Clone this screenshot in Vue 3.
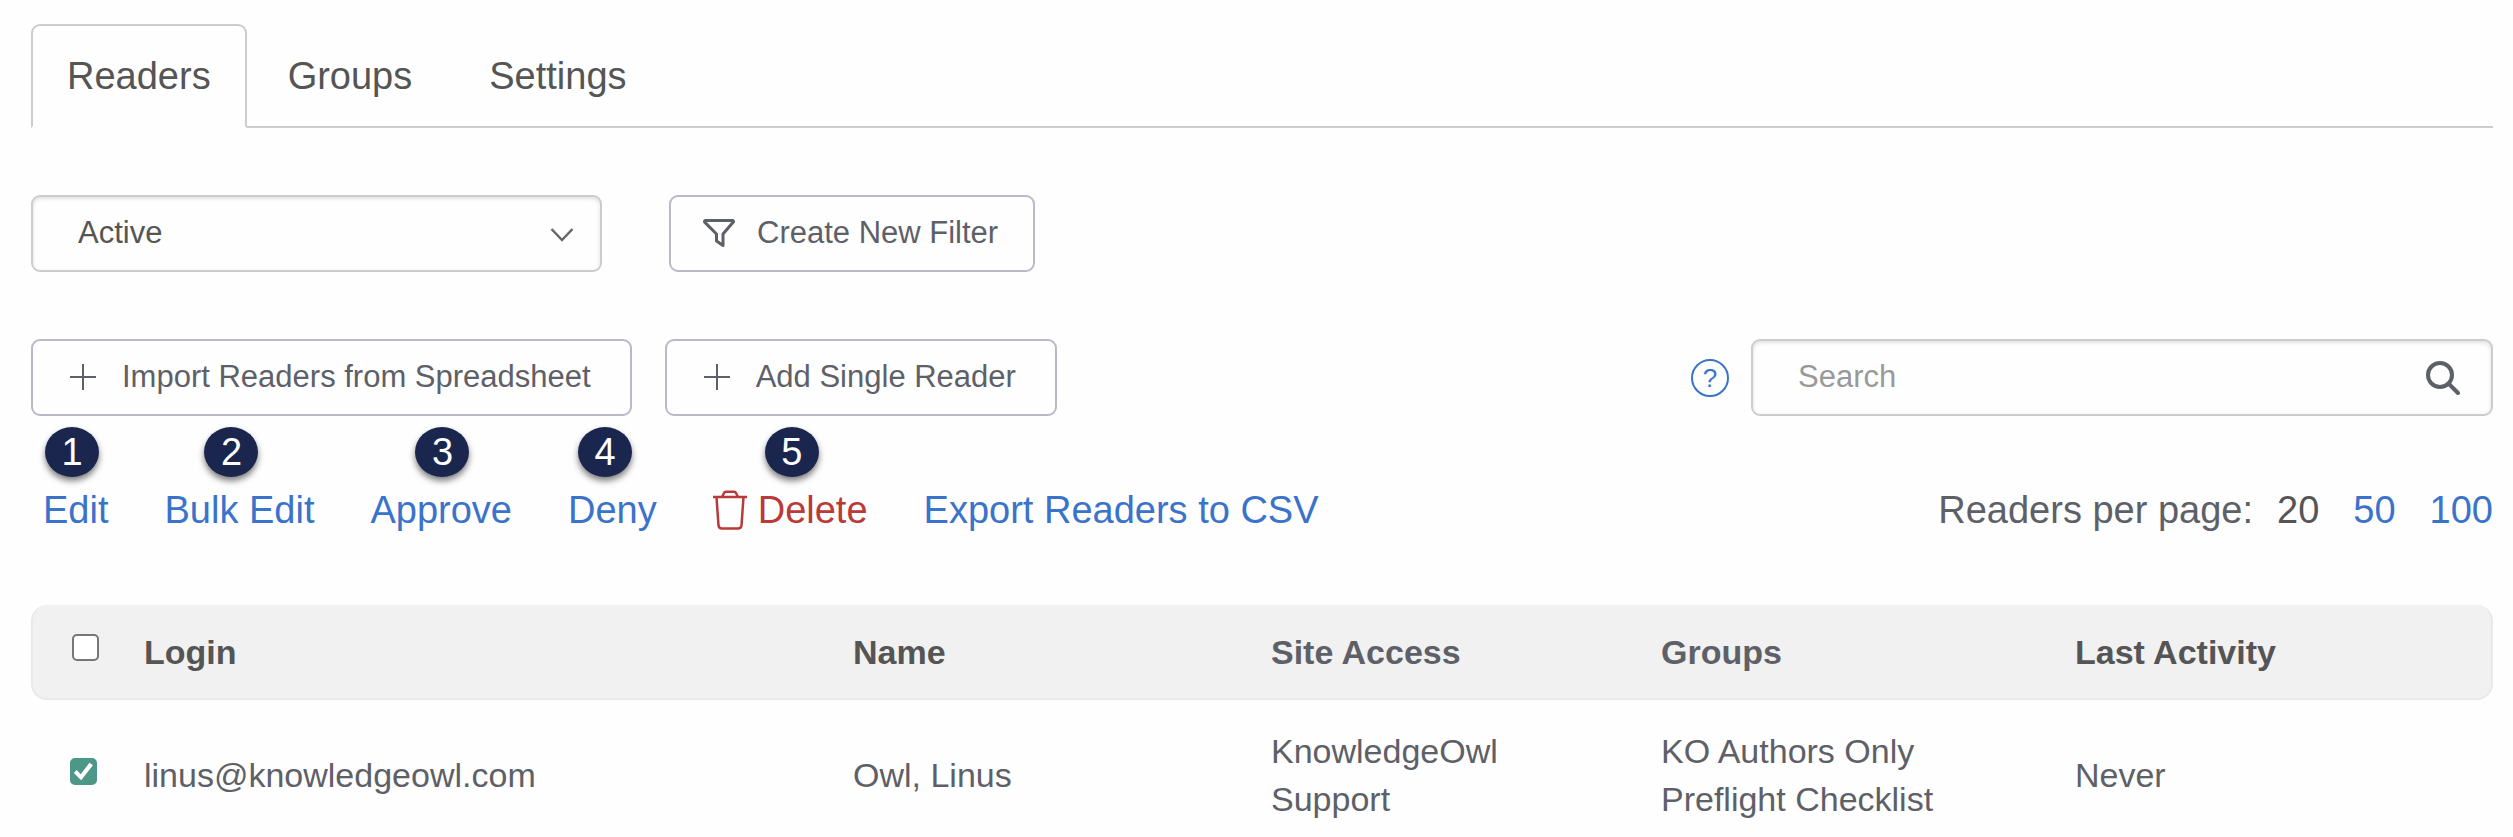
<script setup>
import { ref } from 'vue'

const tabs = ['Readers', 'Groups', 'Settings']
const activeTab = ref('Readers')
const status = ref('Active')
const query = ref('')
const allChecked = ref(false)
// markerX is where the numbered marker floats above its link
const actions = [
  { label: 'Edit', step: 1, markerX: 2 },
  { label: 'Bulk Edit', step: 2, markerX: 40 },
  { label: 'Approve', step: 3, markerX: 45 },
  { label: 'Deny', step: 4, markerX: 10 },
  { label: 'Delete', step: 5, markerX: 52, danger: true },
  { label: 'Export Readers to CSV' },
]
const readers = ref([
  {
    checked: true,
    login: 'linus@knowledgeowl.com',
    name: 'Owl, Linus',
    sites: ['KnowledgeOwl', 'Support'],
    groups: ['KO Authors Only', 'Preflight Checklist'],
    last: 'Never',
  },
])
</script>

<template>
  <main class="page">
    <nav class="tabs" aria-label="Reader sections">
      <a
        v-for="tab in tabs"
        :key="tab"
        href="#"
        class="tab"
        :class="{ active: tab === activeTab }"
        @click.prevent="activeTab = tab"
      >{{ tab }}</a>
    </nav>

    <div class="row filters">
      <div class="select-wrap">
        <select v-model="status" class="field" aria-label="Reader status">
          <option>Active</option>
        </select>
        <svg class="chevron" viewBox="0 0 24 16" aria-hidden="true">
          <path d="M1.500 2 12 13 22.500 2" fill="none" stroke="#666" stroke-width="2.500" />
        </svg>
      </div>
      <button type="button" class="btn filter-btn">
        <svg class="funnel" viewBox="0 0 32 28" aria-hidden="true">
          <path d="M2.500 1.500h27a1 1 0 0 1 .8 1.600L20 15v11.500l-6.500-4.500v-7L1.700 3.100a1 1 0 0 1 .8-1.600z" fill="none" stroke="currentColor" stroke-width="3" stroke-linejoin="round" />
        </svg>
        Create New Filter
      </button>
    </div>

    <div class="row tools">
      <button v-for="label in ['Import Readers from Spreadsheet', 'Add Single Reader']" :key="label" type="button" class="btn">
        <svg class="plus" viewBox="0 0 26 26" aria-hidden="true">
          <path d="M13 0v26M0 13h26" stroke="currentColor" stroke-width="2" />
        </svg>
        {{ label }}
      </button>
      <div class="search-area">
        <a href="#" class="help" aria-label="Search help">?</a>
        <div class="search">
          <input v-model="query" class="field" type="text" placeholder="Search" aria-label="Search readers" />
          <button type="button" class="search-btn" aria-label="Search">
            <svg viewBox="0 0 34 34" aria-hidden="true">
              <circle cx="14" cy="14" r="12" fill="none" stroke="currentColor" stroke-width="4" />
              <path d="M22.500 22.500 32 32" stroke="currentColor" stroke-width="4" stroke-linecap="round" />
            </svg>
          </button>
        </div>
      </div>
    </div>

    <div class="row actions">
      <a v-for="a in actions" :key="a.label" href="#" class="action" :class="{ danger: a.danger }">
        <span v-if="a.step" class="badge" :style="{ left: a.markerX + 'px' }">{{ a.step }}</span>
        <svg v-if="a.danger" class="trash" viewBox="0 0 34 40" aria-hidden="true">
          <g fill="none" stroke="currentColor" stroke-width="2.500" stroke-linejoin="round">
            <path d="M0 7h34" />
            <path d="M9 7l2-4a2 2 0 0 1 2-1.200h8a2 2 0 0 1 2 1.200l2 4" />
            <path d="M3.500 7l2 28.500a3.500 3.500 0 0 0 3.500 3h16a3.500 3.500 0 0 0 3.500-3l2-28.500" />
          </g>
        </svg>
        {{ a.label }}
      </a>
      <div class="per-page">
        <span>Readers per page:</span>
        <span class="current">20</span>
        <a href="#">50</a>
        <a href="#">100</a>
      </div>
    </div>

    <table class="readers">
      <thead>
        <tr>
          <th class="pick"><input v-model="allChecked" type="checkbox" aria-label="Select all readers" /></th>
          <th class="login dark">Login</th>
          <th class="name dark">Name</th>
          <th class="site">Site Access</th>
          <th class="group">Groups</th>
          <th class="dark">Last Activity</th>
        </tr>
      </thead>
      <tbody>
        <tr v-for="r in readers" :key="r.login">
          <td class="pick"><input v-model="r.checked" type="checkbox" :aria-label="'Select ' + r.login" /></td>
          <td>{{ r.login }}</td>
          <td>{{ r.name }}</td>
          <td><div v-for="s in r.sites" :key="s">{{ s }}</div></td>
          <td><div v-for="g in r.groups" :key="g">{{ g }}</div></td>
          <td>{{ r.last }}</td>
        </tr>
      </tbody>
    </table>
  </main>
</template>

<style>
body {
  margin: 0;
  background: #fefefe;
}
</style>

<style scoped>
.page {
  padding: 24px 20px 0 31px;
  font-family: "Liberation Sans", Arial, sans-serif;
  font-size: 38px;
  color: #5e6068;
}
.page *,
.page {
  box-sizing: border-box;
}
a {
  color: #3b73cb;
  text-decoration: none;
}
.tabs {
  display: flex;
  gap: 5px;
  border-bottom: 2px solid #ccc;
}
.tab {
  padding: 28px 34px;
  margin-bottom: -2px;
  border: 2px solid transparent;
  border-radius: 9px 9px 0 0;
  line-height: 44px;
  color: #555;
}
.tab.active {
  border-color: #ccc;
  border-bottom-color: #fefefe;
  background: #fefefe;
}
.row {
  display: flex;
  align-items: center;
}
.filters {
  gap: 67px;
  margin-top: 67px;
}
.field,
.btn {
  height: 77px;
  border: 2px solid #ccc;
  border-radius: 9px;
  background: #fefefe;
  font-family: inherit;
  font-size: 31px;
}
.field {
  width: 100%;
  padding: 0 45px 2px;
  color: #555;
  box-shadow: inset 0 2px 4px rgba(0, 0, 0, 0.12);
  appearance: none;
}
.field::placeholder {
  color: #999;
  opacity: 1;
}
.select-wrap {
  position: relative;
  width: 571px;
}
.chevron {
  position: absolute;
  right: 28px;
  top: 32px;
  width: 24px;
  height: 16px;
  pointer-events: none;
}
.btn {
  display: flex;
  align-items: center;
  gap: 26px;
  padding: 0 39px 2px 37px;
  border-color: #b9b9c9;
  color: #5e6068;
  white-space: nowrap;
}
.filter-btn {
  gap: 22px;
  padding: 0 35px 2px 32px;
}
.funnel {
  width: 32px;
  height: 28px;
}
.plus {
  width: 26px;
  height: 26px;
}
.tools {
  gap: 33px;
  margin-top: 67px;
}
.search-area {
  display: flex;
  align-items: center;
  gap: 22px;
  margin-left: auto;
}
.help {
  width: 38px;
  height: 38px;
  border: 2px solid #3b73cb;
  border-radius: 50%;
  font-size: 26px;
  line-height: 34px;
  text-align: center;
}
.search {
  position: relative;
  width: 742px;
}
.search-btn {
  position: absolute;
  right: 33px;
  top: 22px;
  width: 34px;
  height: 34px;
  padding: 0;
  border: 0;
  background: none;
  color: #5e6068;
}
.search-btn svg {
  display: block;
}
.actions {
  gap: 56px;
  margin-top: 70px;
  padding-left: 12px;
  line-height: 48px;
}
.action {
  position: relative;
  display: flex;
  align-items: center;
  gap: 11px;
  white-space: nowrap;
}
.action.danger {
  color: #b93a38;
}
.trash {
  width: 34px;
  height: 40px;
}
.badge {
  position: absolute;
  top: -59px;
  width: 54px;
  height: 50px;
  border-radius: 50%;
  background: #1b264f;
  color: #fff;
  line-height: 50px;
  text-align: center;
  box-shadow: 0 4px 6px rgba(0, 0, 0, 0.5);
}
.per-page {
  display: flex;
  margin-left: auto;
  gap: 34px;
}
.current {
  margin-left: -10px;
  color: #555;
}
.readers {
  width: 100%;
  margin-top: 71px;
  border-collapse: separate;
  border-spacing: 0;
  table-layout: fixed;
  font-size: 34px;
  line-height: 48px;
  text-align: left;
}
.readers th {
  height: 95px;
  padding: 0;
  background: #f1f1f1;
  border-bottom: 2px solid #e8e8ee;
}
.readers th:first-child {
  border-left: 2px solid #e8e8ee;
  border-radius: 16px 0 0 16px;
}
.readers th:last-child {
  border-right: 2px solid #e8e8ee;
  border-radius: 0 16px 16px 0;
}
.readers th.dark {
  color: #555;
}
.readers td {
  padding: 27px 0;
}
.readers .pick {
  width: 113px;
  padding-left: 39px;
  padding-bottom: 8px;
}
.readers td.pick {
  padding-bottom: 34px;
}
.login {
  width: 709px;
}
.name {
  width: 418px;
}
.site {
  width: 390px;
}
.group {
  width: 414px;
}
.pick input {
  display: block;
  width: 27px;
  height: 27px;
  margin: 0;
  border: 2px solid #767676;
  border-radius: 5px;
  background: #fff;
  appearance: none;
}
.pick input:checked {
  border-color: #4c9787;
  background: #4c9787;
}
.pick input:checked::before {
  content: "";
  display: block;
  width: 23px;
  height: 23px;
  background: #fff;
  clip-path: polygon(8% 57%, 20% 44%, 38% 62%, 76% 12%, 91% 23%, 40% 88%);
}
</style>
